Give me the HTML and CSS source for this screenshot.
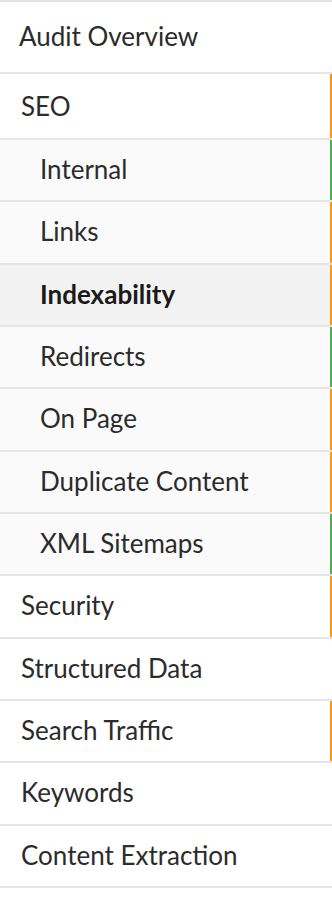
FILE: index.html
```html
<!DOCTYPE html>
<html lang="en">
<head>
    <meta charset="UTF-8">
    <title>Audit Menu</title>
    <link rel="stylesheet" href="styles.css">
</head>
<body>
    <ul class="menu">
        <li class="item overview">Audit Overview</li>
        <li class="item seo warn">SEO</li>
        <li class="item sub ok">Internal</li>
        <li class="item sub warn">Links</li>
        <li class="item sub active warn">Indexability</li>
        <li class="item sub ok">Redirects</li>
        <li class="item sub warn">On Page</li>
        <li class="item sub warn">Duplicate Content</li>
        <li class="item sub ok">XML Sitemaps</li>
        <li class="item warn">Security</li>
        <li class="item">Structured Data</li>
        <li class="item warn">Search Traffic</li>
        <li class="item">Keywords</li>
        <li class="item">Content Extraction</li>
    </ul>
</body>
</html>
```

FILE: styles.css
```css
* {
    margin: 0;
    padding: 0;
    box-sizing: border-box;
}

body {
    background: #fff;
    font-family: 'Lato', 'Liberation Sans', sans-serif;
    color: #2b2b2b;
}

.menu {
    list-style: none;
    width: 332px;
    border-top: 2px solid #e3e3e3;
}

.item {
    display: flex;
    align-items: center;
    height: 62.33px;
    padding-left: 21px;
    padding-bottom: 2px;
    font-size: 26px;
    background: #fff;
    border-bottom: 2px solid #e5e5e5;
}

.overview {
    height: 72px;
    padding-left: 19px;
    padding-bottom: 3px;
}

.seo {
    height: 66px;
    padding-bottom: 0;
}

.sub {
    padding-left: 40px;
    background: #fafafa;
}

.active {
    background: #f2f2f2;
    font-weight: bold;
    color: #1a1a1a;
}

.warn {
    box-shadow: inset -2px 0 0 #ff9800;
}

.ok {
    box-shadow: inset -2px 0 0 #4caf50;
}
```
